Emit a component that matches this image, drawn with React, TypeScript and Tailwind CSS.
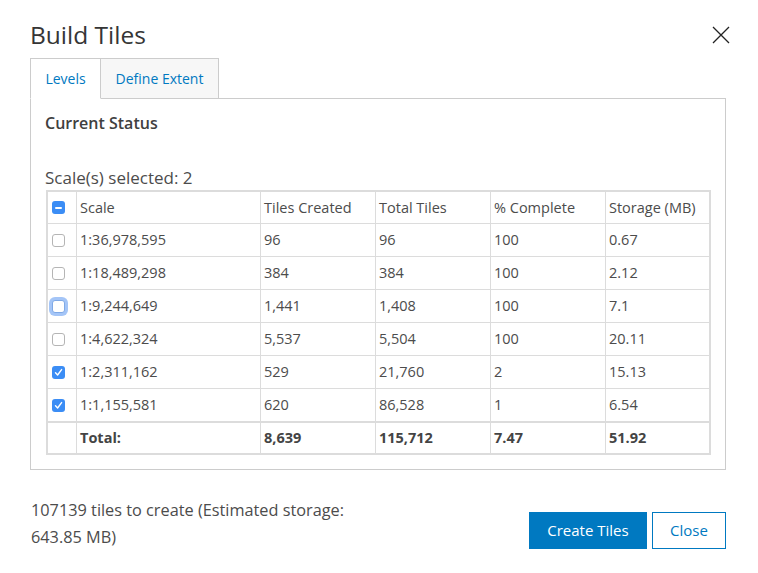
import React from "react";

type Row = {
  scale: string;
  created: string;
  total: string;
  pct: string;
  storage: string;
  state: "off" | "on" | "focus";
};

const rows: Row[] = [
  { scale: "1:36,978,595", created: "96", total: "96", pct: "100", storage: "0.67", state: "off" },
  { scale: "1:18,489,298", created: "384", total: "384", pct: "100", storage: "2.12", state: "off" },
  { scale: "1:9,244,649", created: "1,441", total: "1,408", pct: "100", storage: "7.1", state: "focus" },
  { scale: "1:4,622,324", created: "5,537", total: "5,504", pct: "100", storage: "20.11", state: "off" },
  { scale: "1:2,311,162", created: "529", total: "21,760", pct: "2", storage: "15.13", state: "on" },
  { scale: "1:1,155,581", created: "620", total: "86,528", pct: "1", storage: "6.54", state: "on" },
];

const cols = "grid grid-cols-[29px_184px_115px_115px_115px_103px]";
const cell = "flex items-center pl-[3px] border-r border-[#dcdcdc]";

const Checkbox = ({ state }: { state: "off" | "on" | "focus" | "mixed" }) => {
  if (state === "on" || state === "mixed") {
    return (
      <span className="flex h-[13px] w-[13px] items-center justify-center rounded-[3px] bg-[#3b8df5]">
        {state === "on" ? (
          <svg width="9" height="9" viewBox="0 0 9 9" fill="none">
            <path d="M1.5 4.8 L3.6 7 L7.6 1.6" stroke="white" strokeWidth="1.4" strokeLinecap="round" strokeLinejoin="round" />
          </svg>
        ) : (
          <span className="h-[2px] w-[7px] rounded-full bg-white" />
        )}
      </span>
    );
  }
  if (state === "focus") {
    return (
      <span className="h-[13px] w-[13px] rounded-[3px] border border-[#7fa9e6] bg-white shadow-[0_0_0_3px_rgba(90,150,240,0.55)]" />
    );
  }
  return <span className="h-[13px] w-[13px] rounded-[3px] border border-[#b5b5b5] bg-white" />;
};

const App = () => {
  return (
    <div className="h-[573px] w-[758px] bg-white px-[30px] font-['Open_Sans','Noto_Sans',sans-serif] text-[#4c4c4c]">
      <div className="flex items-start justify-between pt-[19px]">
        <h1 className="text-[24.5px] leading-[32px] text-[#353535]">Build Tiles</h1>
        <svg width="18" height="18" viewBox="0 0 18 18" className="mt-[7px] mr-[-2px]">
          <path d="M1 1 L17 17 M17 1 L1 17" stroke="#222" strokeWidth="1.3" />
        </svg>
      </div>

      <div className="relative z-10 mt-[7px] -mb-px flex text-[14px] text-[#0079c1]">
        <div className="flex h-[41px] w-[71px] items-center justify-center border border-b-white border-[#cccccc] bg-white">
          Levels
        </div>
        <div className="flex h-[41px] w-[118px] items-center justify-center border-t border-r border-b border-[#cccccc] bg-[#f7f7f7]">
          Define Extent
        </div>
      </div>

      <div className="w-[696px] border border-[#cccccc] px-[14px] pt-[12px] pb-[14px]">
        <div className="text-[16px] leading-[24px] font-semibold text-[#404040]">Current Status</div>
        <div className="mt-[33px] mb-[2px] text-[17px] leading-[20px]">Scale(s) selected: 2</div>

        <div className="ml-px border-2 border-[#dcdcdc] text-[14.5px]">
          <div className={`${cols} h-[32px] border-b border-[#dcdcdc]`}>
            <div className="flex items-center border-r border-[#dcdcdc] pl-[4px]">
              <Checkbox state="mixed" />
            </div>
            <div className={cell}>Scale</div>
            <div className={cell}>Tiles Created</div>
            <div className={cell}>Total Tiles</div>
            <div className={cell}>% Complete</div>
            <div className="flex items-center pl-[3px]">Storage (MB)</div>
          </div>
          {rows.map((r, i) => (
            <div
              key={r.scale}
              className={`${cols} ${i === rows.length - 1 ? "h-[34px] border-b-2" : "h-[33px] border-b"} border-[#dcdcdc]`}
            >
              <div className="flex items-center border-r border-[#dcdcdc] pl-[4px]">
                <Checkbox state={r.state} />
              </div>
              <div className={cell}>{r.scale}</div>
              <div className={cell}>{r.created}</div>
              <div className={cell}>{r.total}</div>
              <div className={cell}>{r.pct}</div>
              <div className="flex items-center pl-[3px]">{r.storage}</div>
            </div>
          ))}
          <div className={`${cols} h-[30px] font-bold text-[#444]`}>
            <div className="border-r border-[#dcdcdc]" />
            <div className={cell}>Total:</div>
            <div className={cell}>8,639</div>
            <div className={cell}>115,712</div>
            <div className={cell}>7.47</div>
            <div className="flex items-center pl-[3px]">51.92</div>
          </div>
        </div>
      </div>

      <div className="flex w-[696px] items-start justify-between">
        <p className="mt-[27px] pl-px text-[16.3px] leading-[27px]">
          107139 tiles to create (Estimated storage:
          <br />
          643.85 MB)
        </p>
        <div className="mt-[42px] flex gap-[5px] text-[15px]">
          <button className="h-[37px] w-[118px] bg-[#0079c1] text-white">Create Tiles</button>
          <button className="h-[37px] w-[74px] border border-[#0079c1] bg-white text-[#0079c1]">Close</button>
        </div>
      </div>
    </div>
  );
};

export default App;
